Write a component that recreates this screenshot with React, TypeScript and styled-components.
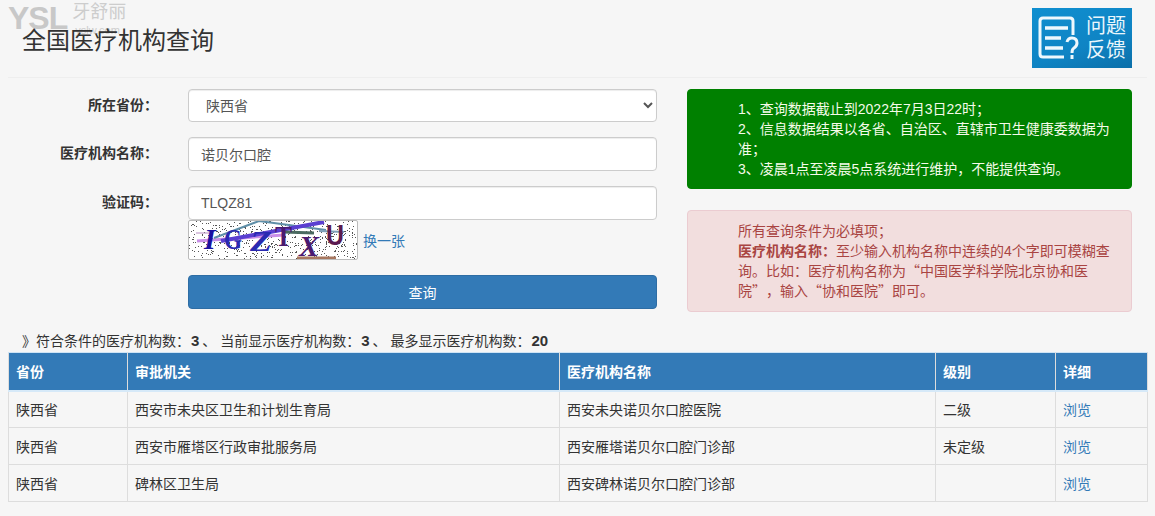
import React from 'react'
import styled, { createGlobalStyle } from 'styled-components'

const GlobalStyle = createGlobalStyle`
  html, body {
    margin: 0;
    background: #f6f6f6;
    color: #333;
    font-family: "Liberation Sans", "Noto Sans CJK SC", sans-serif;
    font-size: 14px;
  }
  * { box-sizing: border-box; }
`

const Page = styled.div`
  position: relative;
  width: 1155px;
  height: 516px;
  padding: 0 8px;
  overflow: hidden;
`
const Watermark = styled.div`
  position: absolute;
  left: 8px;
  top: -6px;
  display: flex;
  gap: 5px;
  pointer-events: none;
`
const WatermarkMark = styled.span`
  font-size: 32px;
  font-weight: 700;
  letter-spacing: -1px;
  line-height: 48px;
  color: #c8c8c8;
`
const WatermarkText = styled.div`
  display: flex;
  flex-direction: column;
  padding-top: 7px;
  font-size: 18px;
  line-height: 22px;
  color: #cdcdcd;
`
const WatermarkSite = styled.span`
  font-size: 11px;
  line-height: 10px;
  padding-left: 3px;
  margin-top: 2px;
`
const Header = styled.header`
  display: flex;
  justify-content: space-between;
  height: 78px;
  padding: 8px 15px 0 14px;
  border-bottom: 1px solid #eee;
`
const Title = styled.h1`
  position: relative;
  margin: 17px 0 0;
  font-size: 24px;
  line-height: 32px;
  font-weight: 400;
  color: #333;
`
const Feedback = styled.div`
  display: flex;
  align-items: center;
  gap: 4px;
  width: 100px;
  height: 60px;
  padding-left: 6px;
  background: linear-gradient(160deg, #0f8fd0 0%, #0f84c4 60%, #0b6fa9 100%);
`
const FeedbackText = styled.div`
  display: flex;
  flex-direction: column;
  color: #eaf6fc;
  font-size: 20px;
  line-height: 24px;
  white-space: nowrap;
`
const Top = styled.div`
  display: flex;
  padding-top: 11px;
`
const Form = styled.form`
  display: grid;
  grid-template-columns: 150px 469px;
  column-gap: 30px;
  row-gap: 15px;
  align-content: start;
  width: 664px;
`
const Label = styled.label`
  text-align: right;
  font-weight: 700;
  line-height: 20px;
  padding-top: 6px;
  white-space: nowrap;
`
const Field = styled.div`
  display: flex;
  flex-direction: column;
`
const Select = styled.select`
  width: 100%;
  height: 33px;
  padding: 0 13px;
  border: 1px solid #ccc;
  border-radius: 4px;
  background: #fff;
  color: #555;
  font: inherit;
  box-shadow: inset 0 1px 1px rgba(0, 0, 0, 0.075);
`
const Input = styled.input`
  width: 100%;
  height: 34px;
  padding: 0 12px;
  border: 1px solid #ccc;
  border-radius: 4px;
  background: #fff;
  color: #555;
  font: inherit;
  box-shadow: inset 0 1px 1px rgba(0, 0, 0, 0.075);
`
const CaptchaRow = styled.div`
  display: flex;
  align-items: center;
  gap: 5px;
  height: 40px;
`
const CaptchaBox = styled.svg`
  display: block;
  width: 170px;
  height: 40px;
  border: 1px solid #bbb;
  border-radius: 2px;
  background: #fff;
`
const TextLink = styled.a`
  color: #337ab7;
  text-decoration: none;
`
const Spacer = styled.div``
const SubmitButton = styled.button`
  height: 34px;
  border: 1px solid #2e6da4;
  border-radius: 4px;
  background: #337ab7;
  color: #fff;
  font: inherit;
`
const Notes = styled.div`
  display: flex;
  flex-direction: column;
  gap: 21px;
  width: 445px;
  margin-left: 15px;
`
const Note = styled.div<{ $tone: 'green' | 'red' }>`
  padding: ${p => (p.$tone === 'green' ? '9px 20px 9px 50px' : '10px 20px 10px 50px')};
  border: 1px solid ${p => (p.$tone === 'green' ? '#008000' : '#ebccd1')};
  border-radius: 4px;
  background: ${p => (p.$tone === 'green' ? '#008000' : '#f2dede')};
  color: ${p => (p.$tone === 'green' ? '#f5fbe9' : '#a94442')};
  line-height: 20px;
  text-spacing-trim: space-all;
`
const Quote = styled.span`
  font-family: "Noto Sans CJK SC", sans-serif;
  line-height: 0;
`
const Summary = styled.div`
  margin-top: 19px;
  padding-left: 14px;
  line-height: 20px;
  height: 21px;
  color: #333;
`
const Count = styled.b`
  font-size: 15px;
  line-height: 0;
  margin: 0 3px 0 1px;
`
const Table = styled.table`
  width: 1139px;
  border-collapse: collapse;
  table-layout: fixed;
`
const HeadCell = styled.th<{ $w: number }>`
  width: ${p => p.$w}px;
  height: 38px;
  padding: 0 7px;
  background: #337ab7;
  color: #fff;
  text-align: left;
  font-weight: 700;
  border: 1px solid #ddd;
  border-top-color: #cfe4f5;
  border-bottom: 2px solid #d6e9f8;
`
const Cell = styled.td`
  height: 37px;
  padding: 0 7px;
  border: 1px solid #ddd;
  color: #333;
`

const rows = [
  ['陕西省', '西安市未央区卫生和计划生育局', '西安未央诺贝尔口腔医院', '二级'],
  ['陕西省', '西安市雁塔区行政审批服务局', '西安雁塔诺贝尔口腔门诊部', '未定级'],
  ['陕西省', '碑林区卫生局', '西安碑林诺贝尔口腔门诊部', ''],
]

// fixed speckle for the captcha background
const hash = (n: number) => {
  const v = Math.sin(n * 12.9898) * 43758.5453
  return v - Math.floor(v)
}
const dots = Array.from({ length: 520 }, (_, i) => ({
  x: Math.floor(hash(i + 1) * 168),
  y: Math.floor(hash(i + 2000) * 38),
}))

const Captcha = () => (
  <CaptchaBox viewBox="0 0 168 38">
    {dots.map((d, i) => (
      <rect key={i} x={d.x} y={d.y} width="1" height="1" fill="#555" />
    ))}
    <path d="M7 12 L20 12" stroke="#b58ac0" strokeWidth="1" />
    <path d="M8 20 L95 14" stroke="#c98fe8" strokeWidth="3" />
    <path d="M25 17 L70 0 L137 9" stroke="#5f8fa8" strokeWidth="2" fill="none" />
    <path d="M32 20 L135 1" stroke="#5a3fd0" strokeWidth="4" />
    <path d="M95 11 L125 12" stroke="#4a6a60" strokeWidth="3" />
    <path d="M130 10 L155 11" stroke="#7fa0b8" strokeWidth="2" />
    <path d="M108 37 L147 37" stroke="#a87860" strokeWidth="3" />
    <g fontFamily="Liberation Serif, serif" fontWeight="700" fontSize="30">
      <text x="15" y="28" fill="#1a10a0" fontStyle="italic">I</text>
      <text x="35" y="28" fill="#2a2ab0" textLength="18" lengthAdjust="spacingAndGlyphs">G</text>
      <text x="61" y="30" fill="#2a2ab0" fontStyle="italic" textLength="22" lengthAdjust="spacingAndGlyphs">Z</text>
      <text x="86" y="25" fill="#4a1a70" textLength="17" lengthAdjust="spacingAndGlyphs">T</text>
      <text x="110" y="35" fill="#4a1a70" fontStyle="italic" textLength="20" lengthAdjust="spacingAndGlyphs">X</text>
      <text x="137" y="24" fill="#5a1a50" fontFamily="Liberation Sans, sans-serif" textLength="18" lengthAdjust="spacingAndGlyphs">U</text>
    </g>
  </CaptchaBox>
)

const App = () => (
  <>
    <GlobalStyle />
    <Page>
      <Watermark>
        <WatermarkMark>YSL</WatermarkMark>
        <WatermarkText>
          <span>牙舒丽</span>
          <WatermarkSite>yslw.com</WatermarkSite>
        </WatermarkText>
      </Watermark>
      <Header>
        <Title>全国医疗机构查询</Title>
        <Feedback>
          <svg width="44" height="46" viewBox="0 0 44 46" fill="none" stroke="#eef8fd">
            <path d="M35 20 V6 Q35 3 32 3 H5 Q2 3 2 6 V39 Q2 42 5 42 H26" strokeWidth="3" />
            <path d="M7 13 H30 M7 23 H23 M7 33 H25" strokeWidth="3.5" />
            <path d="M29 27 Q30 23 34 23 Q39 23 39 28 Q39 31 36 33 Q34 34 34 38" strokeWidth="3" />
            <path d="M34 40 V44" strokeWidth="3" />
          </svg>
          <FeedbackText>
            <span>问题</span>
            <span>反馈</span>
          </FeedbackText>
        </Feedback>
      </Header>
      <Top>
        <Form>
          <Label>所在省份：</Label>
          <Select defaultValue="陕西省">
            <option>陕西省</option>
          </Select>
          <Label>医疗机构名称：</Label>
          <Input defaultValue="诺贝尔口腔" />
          <Label>验证码：</Label>
          <Field>
            <Input defaultValue="TLQZ81" />
            <CaptchaRow>
              <Captcha />
              <TextLink href="#">换一张</TextLink>
            </CaptchaRow>
          </Field>
          <Spacer />
          <SubmitButton type="button">查询</SubmitButton>
        </Form>
        <Notes>
          <Note $tone="green">
            1、查询数据截止到2022年7月3日22时；<br />
            2、信息数据结果以各省、自治区、直辖市卫生健康委数据为准；<br />
            3、凌晨1点至凌晨5点系统进行维护，不能提供查询。
          </Note>
          <Note $tone="red">
            所有查询条件为必填项；<br />
            <b>医疗机构名称：</b>至少输入机构名称中连续的4个字即可模糊查询。比如：医疗机构名称为<Quote>“</Quote>中国医学科学院北京协和医院<Quote>”</Quote>，输入<Quote>“</Quote>协和医院<Quote>”</Quote>即可。
          </Note>
        </Notes>
      </Top>
      <Summary>
        》符合条件的医疗机构数：<Count>3</Count>、 当前显示医疗机构数：<Count>3</Count>、 最多显示医疗机构数：<Count>20</Count>
      </Summary>
      <Table>
        <thead>
          <tr>
            <HeadCell $w={119}>省份</HeadCell>
            <HeadCell $w={432}>审批机关</HeadCell>
            <HeadCell $w={376}>医疗机构名称</HeadCell>
            <HeadCell $w={120}>级别</HeadCell>
            <HeadCell $w={92}>详细</HeadCell>
          </tr>
        </thead>
        <tbody>
          {rows.map(r => (
            <tr key={r[2]}>
              {r.map((c, i) => (
                <Cell key={i}>{c}</Cell>
              ))}
              <Cell>
                <TextLink href="#">浏览</TextLink>
              </Cell>
            </tr>
          ))}
        </tbody>
      </Table>
    </Page>
  </>
)

export default App
